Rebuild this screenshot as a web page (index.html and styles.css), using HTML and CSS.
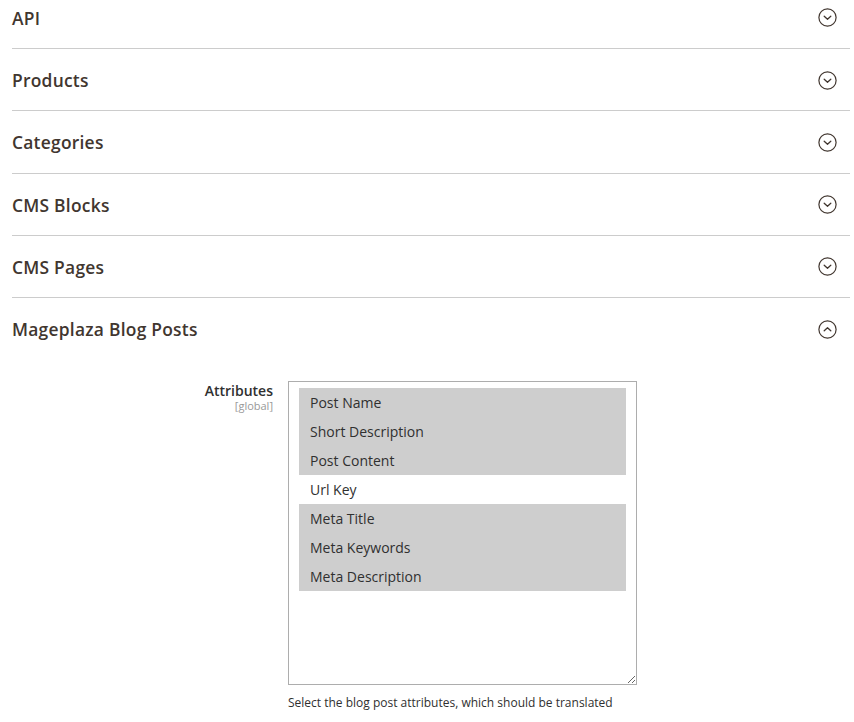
FILE: index.html
```html
<!DOCTYPE html>
<html>
<head>
<meta charset="utf-8">
<link rel="stylesheet" href="styles.css">
</head>
<body>
<div class="sections">
  <div class="section">
    <div class="section-title"><span>API</span>
      <svg class="toggle" viewBox="0 0 19 19" width="19" height="19"><circle cx="9.5" cy="9.5" r="8.6"/><path d="M6.2 8.2 L9.5 11.3 L12.8 8.2"/></svg>
    </div>
  </div>
  <div class="section">
    <div class="section-title"><span>Products</span>
      <svg class="toggle" viewBox="0 0 19 19" width="19" height="19"><circle cx="9.5" cy="9.5" r="8.6"/><path d="M6.2 8.2 L9.5 11.3 L12.8 8.2"/></svg>
    </div>
  </div>
  <div class="section">
    <div class="section-title"><span>Categories</span>
      <svg class="toggle" viewBox="0 0 19 19" width="19" height="19"><circle cx="9.5" cy="9.5" r="8.6"/><path d="M6.2 8.2 L9.5 11.3 L12.8 8.2"/></svg>
    </div>
  </div>
  <div class="section">
    <div class="section-title"><span>CMS Blocks</span>
      <svg class="toggle" viewBox="0 0 19 19" width="19" height="19"><circle cx="9.5" cy="9.5" r="8.6"/><path d="M6.2 8.2 L9.5 11.3 L12.8 8.2"/></svg>
    </div>
  </div>
  <div class="section">
    <div class="section-title"><span>CMS Pages</span>
      <svg class="toggle" viewBox="0 0 19 19" width="19" height="19"><circle cx="9.5" cy="9.5" r="8.6"/><path d="M6.2 8.2 L9.5 11.3 L12.8 8.2"/></svg>
    </div>
  </div>
  <div class="section open">
    <div class="section-title"><span>Mageplaza Blog Posts</span>
      <svg class="toggle" viewBox="0 0 19 19" width="19" height="19"><circle cx="9.5" cy="9.5" r="8.6"/><path d="M6.2 10.8 L9.5 7.7 L12.8 10.8"/></svg>
    </div>
    <div class="fieldset">
      <div class="label">
        <span class="label-text">Attributes</span>
        <span class="scope">[global]</span>
      </div>
      <div class="control">
        <div class="multiselect">
          <div class="option selected">Post Name</div>
          <div class="option selected">Short Description</div>
          <div class="option selected">Post Content</div>
          <div class="option">Url Key</div>
          <div class="option selected">Meta Title</div>
          <div class="option selected">Meta Keywords</div>
          <div class="option selected">Meta Description</div>
        </div>
        <p class="note">Select the blog post attributes, which should be translated</p>
      </div>
    </div>
  </div>
</div>
</body>
</html>
```

FILE: styles.css
```css
html, body {
  margin: 0;
  padding: 0;
  background: #fff;
}
body {
  font-family: "Open Sans", "Noto Sans", sans-serif;
  color: #303030;
  overflow: hidden;
}
.sections {
  margin-top: -13.25px;
  padding: 0 4px 0 12px;
}
.section {
  border-bottom: 1px solid #cccccc;
}
.section.open {
  border-bottom: none;
}
.section-title {
  display: flex;
  align-items: center;
  justify-content: space-between;
  padding: 21px 0 20.25px 0;
  line-height: 20px;
  font-size: 17.4px;
  letter-spacing: 0.25px;
  font-weight: 600;
  color: #41362f;
}
.toggle {
  margin-right: 13px;
  fill: none;
  stroke: #41362f;
  stroke-width: 1.2;
}
.toggle path {
  stroke-width: 1.3;
  stroke-linecap: round;
  stroke-linejoin: round;
}
.fieldset {
  display: grid;
  grid-template-columns: 261px 349px;
  column-gap: 15px;
  padding-top: 21.75px;
}
.label {
  text-align: right;
}
.label-text {
  display: block;
  font-size: 14px;
  font-weight: 600;
  line-height: 20px;
  color: #303030;
}
.scope {
  display: block;
  font-size: 11px;
  line-height: 10px;
  color: #999999;
}
.multiselect {
  box-sizing: border-box;
  width: 349px;
  height: 304px;
  border: 1px solid #adadad;
  padding: 6px 10px;
  overflow: auto;
  resize: both;
}
.option {
  height: 29px;
  line-height: 29px;
  padding-left: 11px;
  font-size: 14px;
  color: #303030;
}
.option.selected {
  background: #cecece;
}
.note {
  margin: 9px 0 0 0;
  font-size: 12px;
  line-height: 17px;
  color: #303030;
}
```
